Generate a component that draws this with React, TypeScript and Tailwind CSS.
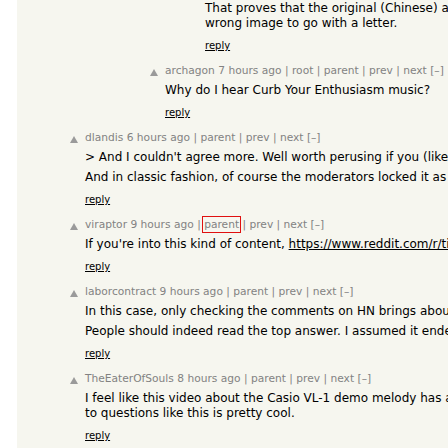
import type { ReactNode } from 'react'

type Comment = {
  id: string
  user?: string
  age?: string
  depth: 0 | 2 | 3
  links: string[]
  paras: ReactNode[][]
  marked?: string
}

const indent: Record<Comment['depth'], string> = {
  0: 'pl-[52px]',
  2: 'pl-[132px]',
  3: 'pl-[172px]',
}

const comments: Comment[] = [
  {
    id: 'c0',
    depth: 3,
    links: [],
    paras: [
      [
        'That proves that the original (Chinese) artist just used the',
        'wrong image to go with a letter.',
      ],
    ],
  },
  {
    id: 'c1',
    user: 'archagon',
    age: '7 hours ago',
    depth: 2,
    links: ['root', 'parent', 'prev', 'next'],
    paras: [['Why do I hear Curb Your Enthusiasm music?']],
  },
  {
    id: 'c2',
    user: 'dlandis',
    age: '6 hours ago',
    depth: 0,
    links: ['parent', 'prev', 'next'],
    paras: [
      ["> And I couldn't agree more. Well worth perusing if you (like me) enjoy this stuff."],
      ['And in classic fashion, of course the moderators locked it as off-topic.'],
    ],
  },
  {
    id: 'c3',
    user: 'viraptor',
    age: '9 hours ago',
    depth: 0,
    links: ['parent', 'prev', 'next'],
    marked: 'parent',
    paras: [
      [
        <>
          If you're into this kind of content,{' '}
          <a className="underline">https://www.reddit.com/r/tipofmytongue/</a>
        </>,
      ],
    ],
  },
  {
    id: 'c4',
    user: 'laborcontract',
    age: '9 hours ago',
    depth: 0,
    links: ['parent', 'prev', 'next'],
    paras: [
      ['In this case, only checking the comments on HN brings about the answer.'],
      ['People should indeed read the top answer. I assumed it ended there.'],
    ],
  },
  {
    id: 'c5',
    user: 'TheEaterOfSouls',
    age: '8 hours ago',
    depth: 0,
    links: ['parent', 'prev', 'next'],
    paras: [
      [
        'I feel like this video about the Casio VL-1 demo melody has a link',
        'to questions like this is pretty cool.',
      ],
    ],
  },
]

function VoteArrow() {
  return (
    <svg width="10" height="10" viewBox="0 0 10 10" className="block">
      <polygon points="5,2 9,9 1,9" fill="#9a9a9a" />
    </svg>
  )
}

function CommentRow({ c }: { c: Comment }) {
  return (
    <div className={`flex pb-[12px] ${indent[c.depth]}`}>
      <div className="w-[16px] shrink-0 pt-[3px]">{c.user && <VoteArrow />}</div>
      <div className="shrink-0">
        {c.user && (
          <div className="text-[10.67px] leading-[13px] text-[#828282] whitespace-nowrap">
            {c.user} {c.age}
            {c.links.map((l) => (
              <span key={l}>
                {' | '}
                <span className={c.marked === l ? 'outline outline-1 outline-[#e01010] outline-offset-[1px]' : ''}>
                  {l}
                </span>
              </span>
            ))}{' '}
            [–]
          </div>
        )}
        <div className={`${c.user ? 'mt-[6px]' : 'mt-[1px]'} text-[12px] leading-[15px] text-black`}>
          {c.paras.map((lines, i) => (
            <div key={i} className={i > 0 ? 'mt-[5px]' : ''}>
              {lines.map((line, j) => (
                <div key={j} className="whitespace-nowrap">
                  {line}
                </div>
              ))}
            </div>
          ))}
        </div>
        <div className="mt-[9px] text-[10px] leading-[12px] text-black underline">reply</div>
      </div>
    </div>
  )
}

export default function App() {
  return (
    <div
      className="w-[448px] h-[448px] overflow-hidden bg-white"
      style={{ fontFamily: '"DejaVu Sans", Verdana, sans-serif' }}
    >
      <div className="ml-[17px] h-full bg-[#f6f6ef]">
        {comments.map((c) => (
          <CommentRow key={c.id} c={c} />
        ))}
      </div>
    </div>
  )
}
